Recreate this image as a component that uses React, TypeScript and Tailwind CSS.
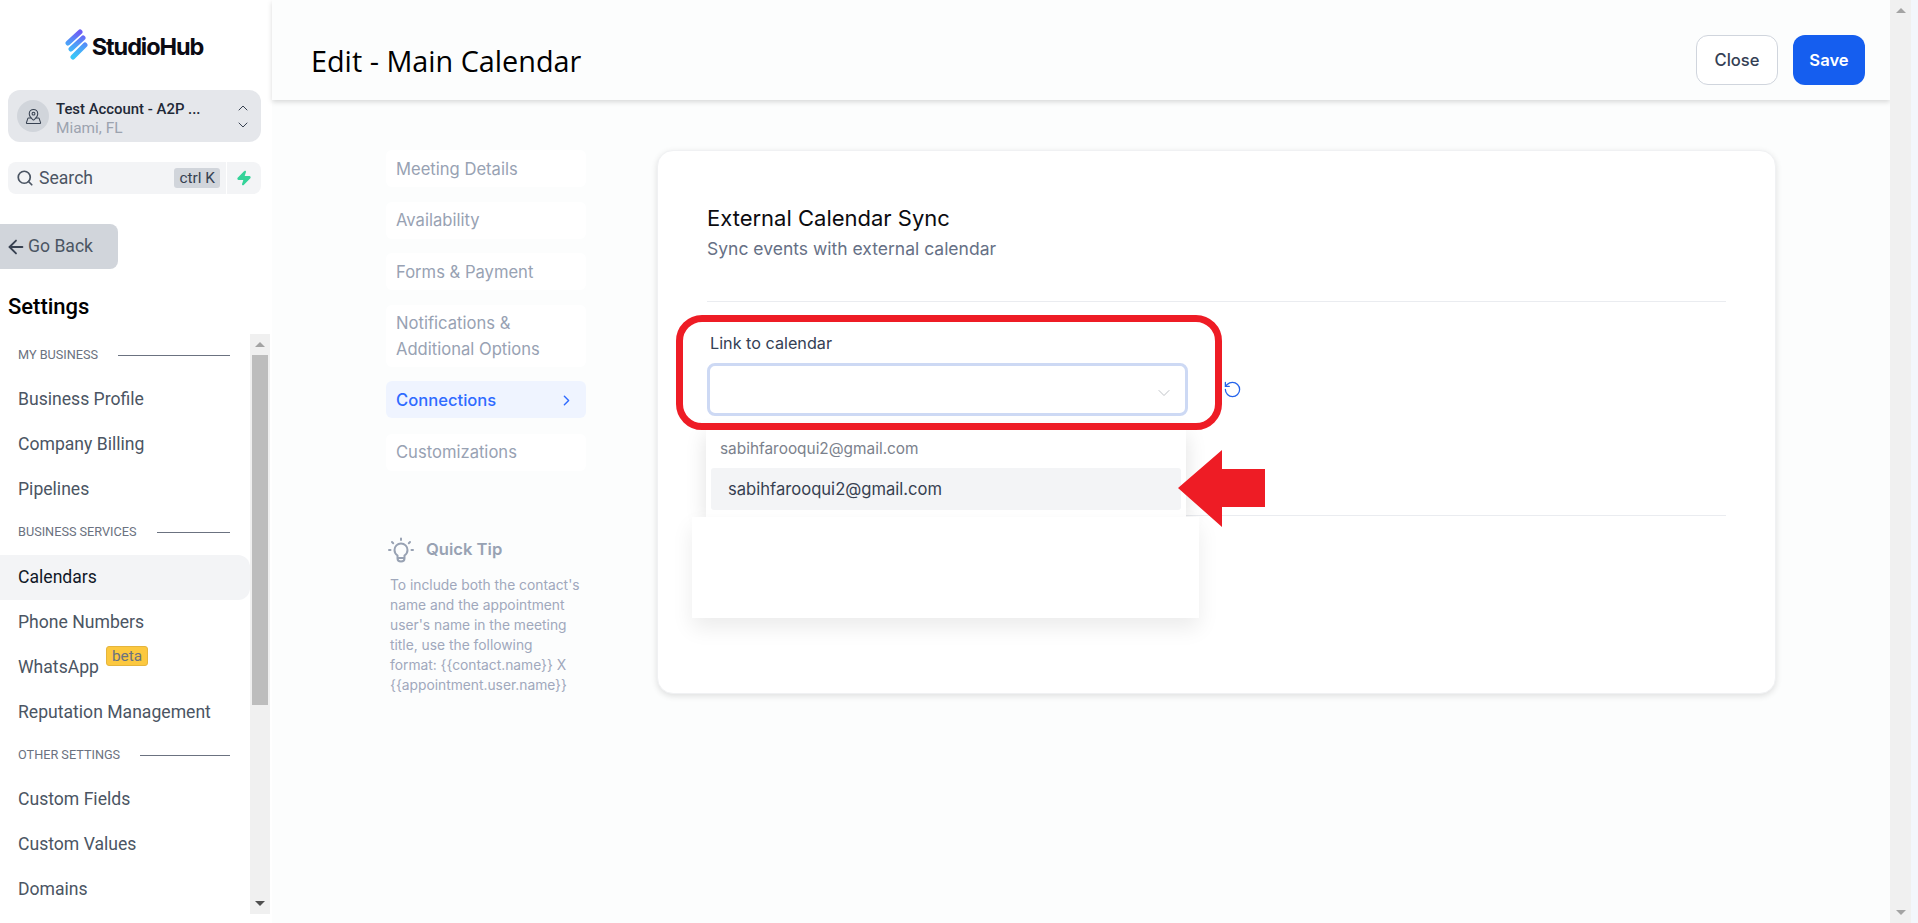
import { ArrowLeft, ChevronDown, ChevronRight, ChevronUp, MapPinned, RotateCcw, Search, Zap } from 'lucide-react';

const TABS = ['Meeting Details', 'Availability', 'Forms & Payment'];

function SectionLabel({ label }: { label: string }) {
  return (
    <div className="flex h-[18px] items-center gap-[20px] pl-[18px] pr-[20px] text-[12.7px] text-[#6b7280]">
      <span className="whitespace-nowrap">{label}</span>
      <span className="h-px flex-1 bg-[#6b7280]" />
    </div>
  );
}

function NavItem({ label, active, badge }: { label: string; active?: boolean; badge?: boolean }) {
  return (
    <div className={`flex h-[45px] items-center pl-[18px] text-[17.6px] ${active ? 'rounded-r-xl bg-[#f3f4f6] text-[#111827]' : 'text-[#4b5563]'}`}>
      {label}
      {badge && (
        <span className="mb-[23px] ml-[7px] rounded-[3px] border border-[#e5b53d] bg-[#fcc83f] px-[5px] text-[15.4px] leading-[18px] text-[#6b7280]">beta</span>
      )}
    </div>
  );
}

function Sidebar() {
  return (
    <aside className="flex h-[923px] w-[272px] shrink-0 flex-col bg-white font-['Roboto',sans-serif]">
      <div className="flex h-[90px] items-start justify-center pt-[28px] pr-[5px]">
        <svg width="24" height="32" viewBox="0 0 24 32" className="mr-[4px]">
          <defs>
            <linearGradient id="logoGrad" x1="0.6" y1="0" x2="0.4" y2="1">
              <stop offset="0" stopColor="#6d5ef5" />
              <stop offset="0.5" stopColor="#4f9bf8" />
              <stop offset="1" stopColor="#38c6f8" />
            </linearGradient>
          </defs>
          <path d="M16 4L4 15M19 10L7 21M21 17L9 29" fill="none" stroke="url(#logoGrad)" strokeWidth="5" strokeLinecap="round" />
        </svg>
        <span className="mt-[4px] font-['Inter',sans-serif] text-[23.5px] leading-[29px] font-bold tracking-[-1.1px] text-[#0b0b14]">StudioHub</span>
      </div>

      <div className="ml-[8px] mr-[11px] flex h-[52px] items-center rounded-xl bg-[#e5e7eb] pl-[9px] pr-[10px]">
        <div className="flex h-[32px] w-[32px] shrink-0 items-center justify-center rounded-full bg-[#d1d5db]">
          <MapPinned size={17} strokeWidth={1.5} className="text-[#374151]" />
        </div>
        <div className="ml-[7px] min-w-0 flex-1 pt-[4px]">
          <div className="whitespace-nowrap text-[14.9px] leading-[19px] font-medium text-[#1f2937]">Test Account - A2P ...</div>
          <div className="text-[15.4px] leading-[18px] text-[#9ca3af]">Miami, FL</div>
        </div>
        <div className="flex flex-col gap-[1px] text-[#374151]">
          <ChevronUp size={16} strokeWidth={1.5} />
          <ChevronDown size={16} strokeWidth={1.5} />
        </div>
      </div>

      <div className="ml-[8px] mr-[11px] mt-[20px] flex h-[32px] gap-[1px]">
        <div className="flex flex-1 items-center rounded-l-lg bg-[#f3f4f6] pl-[8px] pr-[6px]">
          <Search size={18} strokeWidth={2.3} className="text-[#4b5563]" />
          <span className="ml-[5px] flex-1 text-[17.6px] text-[#4b5563]">Search</span>
          <span className="rounded-[3px] bg-[#d1d5db] px-[5px] text-[15.4px] leading-[20px] text-[#374151]">ctrl K</span>
        </div>
        <div className="flex w-[34px] items-center justify-center rounded-r-lg bg-[#f3f4f6]">
          <Zap size={16} className="fill-[#34d399] text-[#34d399]" />
        </div>
      </div>

      <div className="mt-[30px] flex h-[45px] w-[118px] items-center gap-[1px] rounded-r-lg bg-[#d1d5db] pl-[5px] text-[17.6px] text-[#4b5563]">
        <ArrowLeft size={22} strokeWidth={2} className="text-[#374151]" />
        Go Back
      </div>

      <h2 className="mt-[25px] pl-[8px] text-[22px] leading-[26px] font-medium text-black">Settings</h2>

      <div className="mt-[14px] mr-[2px] flex min-h-0 flex-1 pb-[9px]">
        <div className="min-w-0 flex-1 overflow-hidden pt-[12px]">
          <SectionLabel label="MY BUSINESS" />
          <div className="h-[13px]" />
          <NavItem label="Business Profile" />
          <NavItem label="Company Billing" />
          <NavItem label="Pipelines" />
          <div className="h-[11px]" />
          <SectionLabel label="BUSINESS SERVICES" />
          <div className="h-[14px]" />
          <NavItem label="Calendars" active />
          <NavItem label="Phone Numbers" />
          <NavItem label="WhatsApp" badge />
          <NavItem label="Reputation Management" />
          <div className="h-[11px]" />
          <SectionLabel label="OTHER SETTINGS" />
          <div className="h-[13px]" />
          <NavItem label="Custom Fields" />
          <NavItem label="Custom Values" />
          <NavItem label="Domains" />
        </div>
        <div className="flex w-[20px] shrink-0 flex-col bg-[#f0f0f0] px-[2px]">
          <div className="flex h-[21px] items-center justify-center">
            <span className="h-0 w-0 border-x-[5px] border-b-[5px] border-x-transparent border-b-[#a3a3a3]" />
          </div>
          <div className="h-[350px] bg-[#bdbdbd]" />
          <div className="flex-1" />
          <div className="flex h-[21px] items-center justify-center">
            <span className="h-0 w-0 border-x-[5px] border-t-[5px] border-x-transparent border-t-[#505050]" />
          </div>
        </div>
      </div>
    </aside>
  );
}

function TabItem({ label }: { label: string }) {
  return <div className="flex h-[37px] items-center rounded-md bg-white px-[10px] pt-[1px] text-[16.6px] text-[#98a2b3]">{label}</div>;
}

function LeftTabs() {
  return (
    <div className="w-[200px] shrink-0">
      <div className="flex flex-col gap-[14.5px]">
        {TABS.map((t) => (
          <TabItem key={t} label={t} />
        ))}
        <div className="flex h-[62px] items-center rounded-md bg-white px-[10px] pt-[1px] text-[16.6px] leading-[26px] text-[#98a2b3]">
          <span>
            Notifications &<br />
            Additional Options
          </span>
        </div>
        <div className="flex h-[37px] items-center justify-between rounded-md bg-[#eff4ff] pl-[10px] pr-[11px] pt-[1px] text-[16.6px] font-medium text-[#2f6bff]">
          Connections
          <ChevronRight size={17} />
        </div>
        <div className="pt-[1px]">
          <TabItem label="Customizations" />
        </div>
      </div>

      <div className="mt-[66px] flex items-center gap-[12px] pl-[2px] text-[#98a2b3]">
        <svg width="26" height="26" viewBox="0 0 26 26" fill="none" stroke="currentColor" strokeWidth="2" strokeLinecap="round">
          <path d="M13 1.5V3M4 5L5.2 6.2M22 5L20.8 6.2M1 13H2.5M23.5 13H25" />
          <path d="M9.5 18.5C7.6 17.2 6.5 15.2 6.5 13C6.5 9.4 9.4 6.5 13 6.5C16.6 6.5 19.5 9.4 19.5 13C19.5 15.2 18.4 17.2 16.5 18.5V21.5C16.5 23 15.3 24.5 13 24.5C10.7 24.5 9.5 23 9.5 21.5Z" />
          <path d="M10 21H16" />
        </svg>
        <span className="text-[16.6px] font-semibold">Quick Tip</span>
      </div>
      <p className="mt-[12px] w-[200px] pl-[4px] text-[13.8px] leading-[20px] text-[#a0a8bc]">
        To include both the contact's name and the appointment user's name in the meeting title, use the following
        <br />
        format: {'{{contact.name}}'} X {'{{appointment.user.name}}'}
      </p>
    </div>
  );
}

function SyncCard() {
  return (
    <div className="relative h-[544px] w-[1119px] shrink-0 rounded-2xl border border-[#f0f1f3] bg-white px-[49px] pt-[52px] shadow-[0_2px_6px_rgba(0,0,0,0.12)]">
      <h3 className="text-[22px] leading-[30px] text-[#0b0b0f]">External Calendar Sync</h3>
      <p className="mt-[4px] text-[17.5px] leading-[24px] text-[#667085]">Sync events with external calendar</p>
      <div className="mt-[40px] h-px bg-[#eaecf0]" />

      <div className="mt-[29px] pl-[3px] text-[16.2px] leading-[24px] text-[#344054]">Link to calendar</div>
      <div className="mt-[8px] flex items-center">
        <div className="flex h-[53px] w-[481px] items-center justify-end rounded-lg border-[3px] border-[#cdd9f4] bg-white pr-[11px]">
          <ChevronDown size={20} strokeWidth={1.1} className="mt-[7px] text-[#b9bcc2]" />
        </div>
        <RotateCcw size={19} strokeWidth={1.6} className="ml-[35px] text-[#2563eb]" />
      </div>

      <div className="mt-[99px] h-px bg-[#eaecf0]" />

      {/* dropdown, sits over the card */}
      <div className="absolute top-[278px] left-[48px] h-[88px] w-[480px] bg-white shadow-[0_6px_20px_rgba(0,0,0,0.12)]">
        <div className="flex h-[39px] items-center pl-[14px] text-[15.4px] text-[#7b818c]">sabihfarooqui2@gmail.com</div>
        <div className="mx-[5px] flex h-[42px] items-center rounded-[3px] bg-[#f3f4f6] pl-[17px] text-[16.6px] text-[#374151]">sabihfarooqui2@gmail.com</div>
      </div>
      <div className="absolute top-[366px] left-[34px] h-[101px] w-[507px] bg-white shadow-[0_10px_20px_rgba(0,0,0,0.08)]" />
    </div>
  );
}

export default function App() {
  return (
    <div className="relative flex h-[923px] w-[1918px] overflow-hidden bg-[#f3f6fb] font-['Inter',sans-serif]">
      <Sidebar />
      <main className="flex h-[923px] w-[1618px] shrink-0 flex-col bg-[#fcfdfd]">
        <header className="flex h-[100px] shrink-0 items-center justify-between bg-[#fcfdfd] pl-[39px] pr-[25px] pt-[21px] shadow-[0_2px_5px_rgba(0,0,0,0.15)]">
          <h1 className="font-['Open_Sans',sans-serif] text-[28.8px] text-black">Edit - Main Calendar</h1>
          <div className="mb-[1px] flex gap-[15px]">
            <button className="h-[50px] w-[82px] rounded-xl border border-[#d0d5dd] bg-white text-[16.6px] font-medium text-[#344054]">Close</button>
            <button className="h-[50px] w-[72px] rounded-xl bg-[#155eef] text-[16.6px] font-semibold text-white">Save</button>
          </div>
        </header>
        <div className="flex gap-[71px] pl-[114px] pt-[50px]">
          <LeftTabs />
          <SyncCard />
        </div>
      </main>
      <div className="flex w-[21px] shrink-0 flex-col justify-between bg-[#f0f0f0]">
        <div className="flex h-[21px] items-center justify-center">
          <span className="h-0 w-0 border-x-[5px] border-b-[5px] border-x-transparent border-b-[#a3a3a3]" />
        </div>
        <div className="flex h-[21px] items-center justify-center">
          <span className="h-0 w-0 border-x-[5px] border-t-[5px] border-x-transparent border-t-[#a3a3a3]" />
        </div>
      </div>

      {/* red annotation over the picture */}
      <div className="absolute top-[315px] left-[676px] h-[115px] w-[546px] rounded-[26px] border-[7px] border-[#ee1c25]" />
      <svg className="absolute top-[450px] left-[1178px]" width="88" height="78" viewBox="0 0 88 78">
        <path d="M0 38L44 0V19H87V57H44V77Z" fill="#ee1c25" />
      </svg>
    </div>
  );
}
